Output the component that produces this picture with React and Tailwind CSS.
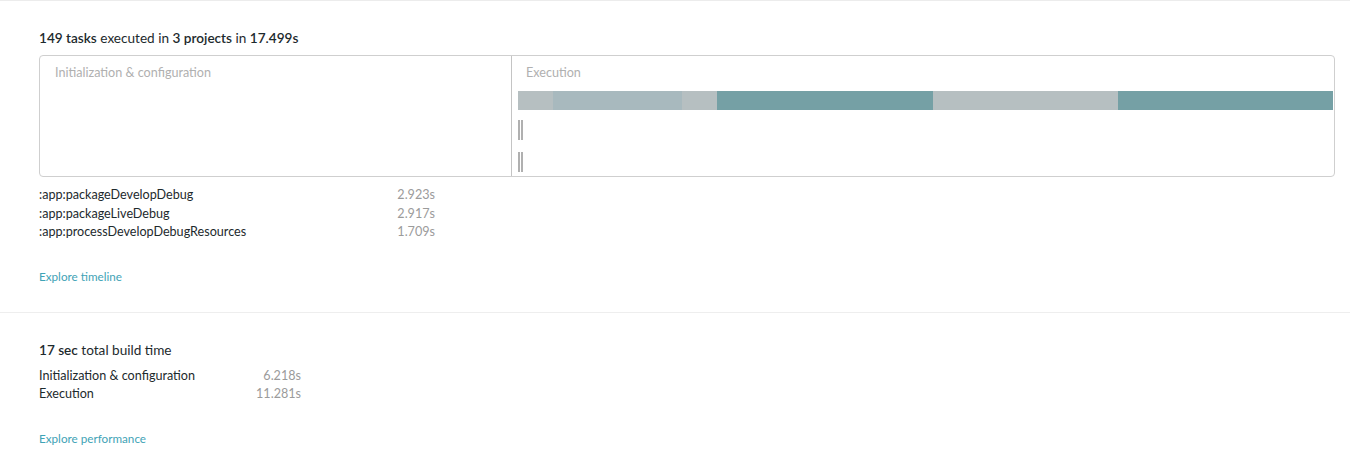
const tasks = [
  [":app:packageDevelopDebug", "2.923s"],
  [":app:packageLiveDebug", "2.917s"],
  [":app:processDevelopDebugResources", "1.709s"],
];

const segments = [
  { w: 35, c: "bg-[#b6bfc1]" },
  { w: 129, c: "bg-[#a8b9be]" },
  { w: 35, c: "bg-[#b6bfc1]" },
  { w: 216, c: "bg-[#75a0a5]" },
  { w: 185, c: "bg-[#b6bfc1]" },
  { w: 215, c: "bg-[#75a0a5]" },
];

function Ticks() {
  return (
    <div className="flex gap-px h-5">
      <div className="w-[2px] bg-[#b0b0b0]" />
      <div className="w-[2px] bg-[#b0b0b0]" />
    </div>
  );
}

export default function App() {
  return (
    <div className="w-[1350px] h-[454px] bg-white text-[#1d2a2d] font-['Lato','Open_Sans',sans-serif] border-t border-[#ececec] overflow-hidden">
      <section className="pl-[39px] pr-[15px] pt-[29px] pb-[29px] border-b border-[#eeeeee]">
        <h2 className="text-[13.6px] leading-[16px]">
          <span className="font-semibold">149 tasks</span> executed in <span className="font-semibold">3 projects</span> in{" "}
          <span className="font-semibold">17.499s</span>
        </h2>

        <div className="mt-[9px] h-[122px] border border-[#cfcfcf] rounded-[4px] flex">
          <div className="w-[472px] border-r border-[#c4c4c4] px-[15px] pt-[10px]">
            <p className="text-[12.6px] leading-[14px] text-[#b0b0b0]">Initialization &amp; configuration</p>
          </div>
          <div className="flex-1 pl-[6px] pt-[10px]">
            <p className="text-[12.6px] leading-[14px] text-[#b0b0b0] pl-[8px]">Execution</p>
            <div className="mt-[11px] flex h-[19px]">
              {segments.map((s, i) => (
                <div key={i} className={s.c} style={{ width: s.w }} />
              ))}
            </div>
            <div className="mt-[10px]">
              <Ticks />
            </div>
            <div className="mt-[12px]">
              <Ticks />
            </div>
          </div>
        </div>

        <div className="mt-[9px] w-[396px] text-[12.6px] leading-[18.5px]">
          {tasks.map(([name, t]) => (
            <div key={name} className="flex justify-between">
              <span>{name}</span>
              <span className="text-[#9b9b9b]">{t}</span>
            </div>
          ))}
        </div>

        <a className="block mt-[27px] text-[11.7px] leading-[14px] text-[#3fa3b6]">Explore timeline</a>
      </section>

      <section className="pl-[39px] pt-[29px]">
        <h2 className="text-[13.6px] leading-[16px]">
          <span className="font-semibold">17 sec</span> total build time
        </h2>
        <div className="mt-[9px] w-[262px] text-[12.6px] leading-[18.5px]">
          <div className="flex justify-between">
            <span>Initialization &amp; configuration</span>
            <span className="text-[#9b9b9b]">6.218s</span>
          </div>
          <div className="flex justify-between">
            <span>Execution</span>
            <span className="text-[#9b9b9b]">11.281s</span>
          </div>
        </div>
        <a className="block mt-[27px] text-[11.7px] leading-[14px] text-[#3fa3b6]">Explore performance</a>
      </section>
    </div>
  );
}
